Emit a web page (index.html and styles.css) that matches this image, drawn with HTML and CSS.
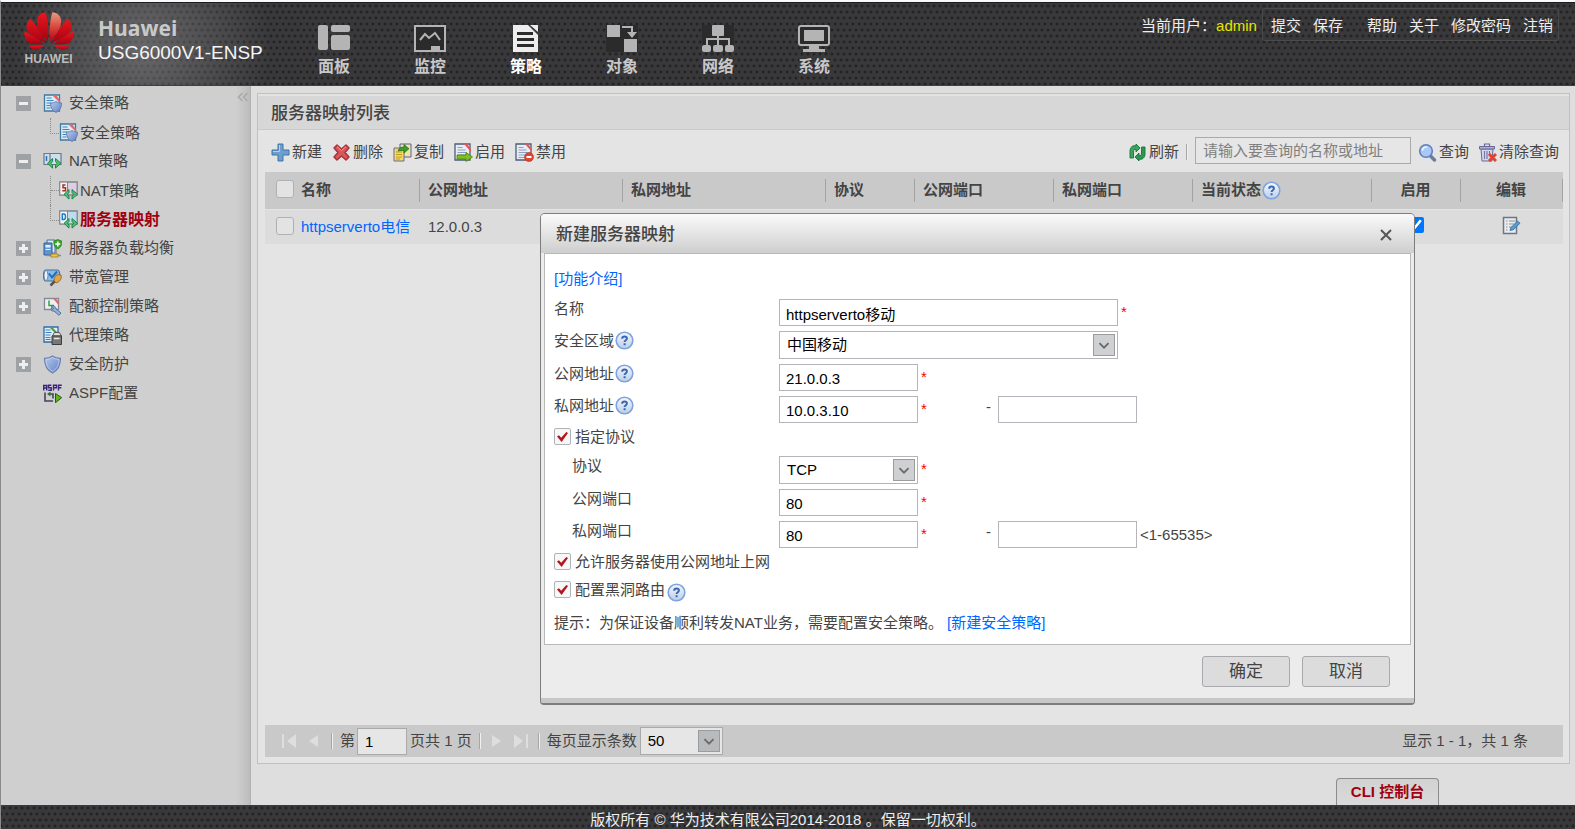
FILE: index.html
```html
<!DOCTYPE html>
<html lang="zh-CN">
<head>
<meta charset="utf-8">
<title>USG6000V1-ENSP</title>
<link rel="stylesheet" href="styles.css">
</head>
<body>
<svg class="sprite" aria-hidden="true">
  <defs>
    <linearGradient id="g-red" x1="0" y1="0" x2="0" y2="1"><stop offset="0" stop-color="#e5191f"/><stop offset="1" stop-color="#a80010"/></linearGradient>
    <linearGradient id="g-shine" x1="0" y1="0" x2="0" y2="1"><stop offset="0" stop-color="#eb9a84"/><stop offset="0.5" stop-color="#d9483c"/><stop offset="1" stop-color="#b80012"/></linearGradient>
    <linearGradient id="g-shield" x1="0" y1="0" x2="1" y2="1"><stop offset="0" stop-color="#b9cdec"/><stop offset="1" stop-color="#5d7fc4"/></linearGradient>
    <linearGradient id="g-help" x1="0" y1="0" x2="0" y2="1"><stop offset="0" stop-color="#f4f8fd"/><stop offset="1" stop-color="#bccfe9"/></linearGradient>
    <g id="p-side">
      <path d="M66 92C52 62 32 32 18 20C6 31 2 50 14 62C26 75 48 85 66 92Z"/>
      <path d="M60 97C40 80 12 63 1 58C-2 75 7 92 20 95C34 98 48 97 60 97Z"/>
      <path d="M60 100L14 101C20 112 32 116 40 112C50 108 56 104 60 100Z"/>
    </g>
  </defs>
  <symbol id="i-plus" viewBox="0 0 19 19"><path d="M7 1h5v6h6v5h-6v6H7v-6H1V7h6z" fill="#6d9fce" stroke="#3e75ab" stroke-linejoin="round"/><path d="M8.500 2v6.500H2" fill="none" stroke="#b3d1ec"/></symbol>
  <symbol id="i-cross" viewBox="0 0 19 19"><path d="M5 2l4.500 4L14 2l3 3-4 4.500 4 4.500-3 3-4.500-4L5 17l-3-3 4-4.500L2 5z" fill="#d9575a" stroke="#a83236" stroke-width="1.500" stroke-linejoin="round"/><path d="M5 3.500l4.500 4 4.500-4" fill="none" stroke="#ee9c9c"/></symbol>
  <symbol id="i-copy" viewBox="0 0 19 19"><path d="M7 1h11v13H7z" fill="#efe6a0" stroke="#5a5f9a"/><path d="M1 5h10v13H1z" fill="#f3dc66" stroke="#6a67a0"/><path d="M3 9h6M3 11.500h6M3 14h6M3 16h4" stroke="#c39a1c"/><path d="M5 8c1-3 3-4 6-4V1.500l5 4.200-5 4.300V7.500c-2 0-4 0-6 .5z" fill="#3f9a2a" stroke="#1d6a1a" stroke-width=".7"/></symbol>
  <symbol id="i-page" viewBox="0 0 19 19"><path d="M1 1h15v16H1z" fill="#e9edf3" stroke="#4c5c78" stroke-width="1.300"/><path d="M3.500 4.500h5M3.500 7h8M3.500 9.500h9M3.500 12h9M3.500 14.500h9" stroke="#8ba0bf"/><path d="M10 1h3l4 5v3z" fill="#e2565c"/></symbol>
  <symbol id="i-enable" viewBox="0 0 19 19"><use href="#i-page"/><path d="M3 12h9V9.500l6.500 4.500-6.500 4.500V16H3z" fill="#7fbf1f" stroke="#4a7d10" stroke-width=".8"/></symbol>
  <symbol id="i-disable" viewBox="0 0 19 19"><use href="#i-page"/><circle cx="14" cy="14" r="4.500" fill="#e0452f" stroke="#b02c1b" stroke-width=".6"/><path d="M11.500 14h5" stroke="#fff" stroke-width="2"/></symbol>
  <symbol id="i-refresh" viewBox="0 0 19 19"><path d="M2 15V8c0-4 3-6 6-5V1l4 4-4 4V6.500C6 6 5.500 7 5.500 9v6z" fill="#3fa45d" stroke="#167434" stroke-width=".9"/><path d="M17 4v7c0 4-3 6-6 5v2l-4-4 4-4v2.500c2 .5 2.500-.5 2.500-2.500V4z" fill="#2f9450" stroke="#167434" stroke-width=".9"/></symbol>
  <symbol id="i-search" viewBox="0 0 19 19"><path d="M11.500 12l5 5" stroke="#6d7f9c" stroke-width="3.500" stroke-linecap="round"/><circle cx="8" cy="8" r="6.300" fill="#a9c8f3" stroke="#5f7fc0" stroke-width="1.600"/><path d="M4.500 7c.5-2 2-3 4-3" fill="none" stroke="#e8f2fd" stroke-width="1.700" stroke-linecap="round"/></symbol>
  <symbol id="i-trash" viewBox="0 0 19 19"><path d="M3 6h12l-1 12H4z" fill="#d6d8ea" stroke="#66689a"/><path d="M1.500 3.500h15V6h-15z" fill="#aeb0cf" stroke="#66689a"/><path d="M6.500 3V1h5v2" fill="none" stroke="#66689a" stroke-width="1.200"/><path d="M6.500 8v8M9 8v8M11.500 8v4" stroke="#7577a8" stroke-width="1.200"/><path d="M11 11l7 7M18 11l-7 7" stroke="#e0452f" stroke-width="3"/></symbol>
  <symbol id="i-help" viewBox="0 0 19 19"><circle cx="9.500" cy="9.500" r="8.300" fill="url(#g-help)" stroke="#7fa3dd" stroke-width="1.600"/><path d="M7.200 7.700C7.200 6.200 8 5.500 9.500 5.500s2.400.8 2.400 2c0 1.700-2.300 1.700-2.300 3.500M9.600 12.300v2" fill="none" stroke="#3a68b0" stroke-width="2"/></symbol>
  <symbol id="i-edit" viewBox="0 0 19 19"><path d="M1.500 1.500h13v16h-13z" fill="#e8ebef" stroke="#6f7680" stroke-width="1.500"/><path d="M4 5h1.500M4 8h1.500M4 11h1.500M4 14h1.500M7 5h6M7 8h5M7 11h3" stroke="#8b929c" stroke-width="1.200"/><path d="M8 14.500l1-3L15.500 5l2.500 2.200-6.500 6.500z" fill="#5a9bd0" stroke="#2f6a9c" stroke-width=".8"/></symbol>
  <symbol id="i-shield" viewBox="0 0 19 19"><path d="M9.500 1c2.500 1.800 5 2.300 8 2.300 0 7-2 11.700-8 14.700-6-3-8-7.700-8-14.700 3 0 5.500-.5 8-2.300z" fill="url(#g-shield)" stroke="#6e7fae" stroke-width="1.200"/><path d="M9.500 2.500c2 1.300 4 1.800 6.500 2-.2 5-1.500 9-6.500 11.800-5-2.800-6.300-6.800-6.500-11.800 2.500-.2 4.500-.7 6.500-2z" fill="none" stroke="#c3d3ef" stroke-width=".8"/></symbol>
  <symbol id="i-policy" viewBox="0 0 19 19"><path d="M1.500 1h15v16h-15z" fill="#dceaf5" stroke="#3f7a9d" stroke-width="1.300"/><path d="M3.500 4h5M3.500 6.500h7M3.500 9h5M3.500 11.500h4M3.500 14h4" stroke="#3a86c0" stroke-width="1.200"/><path d="M9.500 1.500h4l3.500 5V9z" fill="#e06a70"/><path d="M13 7.500c1.700 1.200 3.500 1.500 5.500 1.500 0 5-1.700 7.500-5.500 9.500-3.800-2-5.500-4.500-5.500-9.500 2 0 3.800-.3 5.500-1.500z" fill="url(#g-shield)" stroke="#6477b0" stroke-width=".9"/></symbol>
  <symbol id="i-nat" viewBox="0 0 19 19"><path d="M1 1.500h17v11H1z" fill="#cddfee" stroke="#6d7788" stroke-width="1.200"/><path d="M7 1.500v11" stroke="#6d7788" stroke-width="1.200"/><path d="M3.500 4v5" stroke="#2f6fb8" stroke-width="1.500"/><path d="M9.500 6.500l-5 4.800 5 4.800v-3l-1.600-1.800 1.600-1.800zM12.500 6.500l5.500 4.800-5.500 4.800v-3l1.700-1.800-1.700-1.800z" fill="#52bf72" stroke="#15803c" stroke-width=".9"/></symbol>
  <symbol id="i-snat" viewBox="0 0 19 19"><path d="M.8 1h17.400v13H.8z" fill="#dccfe4" stroke="#7f8490" stroke-width="1.300"/><path d="M1.500 1.700H8v11.600H1.500z" fill="#f5f2f2"/><path d="M8.500 1v13" stroke="#7f8490"/><path d="M6.500 4H4v2.800h2.500v3H3.300" fill="none" stroke="#a83020" stroke-width="1.500"/><path d="M10 8.500l-5 4.800 5 4.800v-3l-1.600-1.800 1.600-1.800zM13 8.500l5.500 4.800-5.500 4.800v-3l1.700-1.800-1.700-1.800z" fill="#52bf72" stroke="#15803c" stroke-width=".9"/></symbol>
  <symbol id="i-dnat" viewBox="0 0 19 19"><path d="M.8 1h17.400v13H.8z" fill="#bfdcef" stroke="#7f8490" stroke-width="1.300"/><path d="M1.500 1.700H8v11.600H1.500z" fill="#f2f5f7"/><path d="M8.500 1v13" stroke="#7f8490"/><path d="M3.300 4h1.500c2.300 0 2.300 5.500 0 5.500H3.300z" fill="none" stroke="#1878c8" stroke-width="1.400"/><path d="M10 8.500l-5 4.800 5 4.800v-3l-1.600-1.800 1.600-1.800zM13 8.500l5.500 4.800-5.500 4.800v-3l1.700-1.800-1.700-1.800z" fill="#52bf72" stroke="#15803c" stroke-width=".9"/></symbol>
  <symbol id="i-balance" viewBox="0 0 19 19"><path d="M4 1h8v13H4z" fill="#dfe8f3" stroke="#4b6c9c"/><path d="M1 4h8v12H1z" fill="#5f96d0" stroke="#2f5e98"/><path d="M2.500 6h5v2.500h-5zM2.500 10h5v1h-5z" fill="#e9f2fb"/><path d="M13 9v6M4 16.500h14" stroke="#8a8a8a" stroke-width="1.500"/><path d="M8 15h7v3H8z" fill="#efc843" stroke="#a17c17" stroke-width=".8"/><path d="M14.800.5l4 1.500c.3 4-1 6.500-4 8-3-1.500-4.300-4-4-8z" fill="#3aa528" stroke="#23801a" stroke-width=".7"/><path d="M14.800 2.500v5M12.300 5h5" stroke="#fff" stroke-width="1.500"/></symbol>
  <symbol id="i-band" viewBox="0 0 19 19"><path d="M2.500 2h12c3 0 3 11 0 11h-12C0 13 0 2 2.500 2z" fill="#8bbce8" stroke="#4a6e9c" stroke-width="1.200"/><ellipse cx="3" cy="7.500" rx="2" ry="5" fill="#e9f2fa" stroke="#4a6e9c" stroke-width=".8"/><path d="M6 5.500l3 4 5-6" fill="none" stroke="#1f6fb5" stroke-width="2"/><path d="M7.500 17.500l5-5" stroke="#555" stroke-width="2.500"/><path d="M11 12.500c0-5 3-6.500 7-5.500 1.500 5-3 7.500-5 8z" fill="#e4a54a" stroke="#8c5d1c" stroke-width=".8"/></symbol>
  <symbol id="i-quota" viewBox="0 0 19 19"><path d="M1.500 1.500h14v11h-14z" fill="#edf0f1" stroke="#848b94" stroke-width="1.300"/><path d="M6 3.500v5h5" fill="none" stroke="#3a9b45" stroke-width="1.500"/><path d="M10 1.500h3l3 4v3z" fill="#e0656a"/><path d="M8 10c2-2 5-1 5 2l5 4-2 2.300-5-4.300c-2 .5-3.500-1-3-2.500l2 .8 1-1z" fill="#91b4dc" stroke="#47699c" stroke-width=".9"/></symbol>
  <symbol id="i-proxy" viewBox="0 0 19 19"><path d="M1 1h14v15H1z" fill="#e2eef7" stroke="#2e6fa8" stroke-width="1.300"/><path d="M2.500 4h5M2.500 6.500h6M2.500 9h5M2.500 11.500h5M2.500 13.500h5" stroke="#3a80bf"/><path d="M8 1.500l5 5" stroke="#4a9a3a" stroke-width="2"/><path d="M9.500 10l1.800-3.500h5L18.500 10z" fill="#dedede" stroke="#555"/><path d="M9 10h9.500v8.500H9z" fill="#777" stroke="#3d3d3d"/><path d="M11 12.500h5.500" stroke="#e8e8e8" stroke-width="1.500"/></symbol>
  <symbol id="i-aspf" viewBox="0 0 19 19"><path d="M.7 6.500V1.500h3v5M.7 4h3M8.300 1.200H5.500v2.500h2.700v2.500H5.300M10.500 6.500V1.200h3v2.500h-3M15.500 6.500V1.200h3.300M15.500 3.700h2.800" fill="none" stroke="#3d2480" stroke-width="1.400"/><path d="M2 8.500V17h8M10 14.500V10H5" fill="none" stroke="#44415c" stroke-width="1.600"/><path d="M7.500 7.500v5L4 10z" fill="#2a7a30"/><path d="M12.500 9.500l6.200 4.200-6.200 5z" fill="#5cb51d" stroke="#215f12"/></symbol>
</svg>

<header class="topbar">
  <div class="brand">
    <div class="logo">
      <svg class="emblem" viewBox="0 0 149 114" aria-hidden="true">
        <g fill="url(#g-red)"><path d="M71 88C74 60 72 20 64 1C50 2 38 12 38 30C39 52 55 72 71 88Z"/><use href="#p-side"/></g>
        <g transform="translate(149 0) scale(-1 1)"><path fill="url(#g-shine)" d="M71 88C74 60 72 20 64 1C50 2 38 12 38 30C39 52 55 72 71 88Z"/><use href="#p-side" fill="url(#g-red)"/></g>
      </svg>
      <span class="logo-name">HUAWEI</span>
    </div>
    <div class="product"><strong class="vendor">Huawei</strong><span class="model">USG6000V1-ENSP</span></div>
  </div>
  <nav class="mainnav">
    <a href="#" class="nav-item"><svg viewBox="0 0 32 27"><rect x="0" y="0" width="10" height="25" rx="2"/><rect x="13" y="0" width="19" height="7" rx="2"/><rect x="13" y="10" width="19" height="15" rx="2"/></svg>面板</a>
    <a href="#" class="nav-item"><svg viewBox="0 0 32 27"><path d="M1 1h30v25H1z" fill="#2b2b2c" stroke="#b4b4b4" stroke-width="2"/><path d="M6 15l5-6 4 4 6-5 5 7" fill="none" stroke="#b4b4b4" stroke-width="2"/><path d="M17 21h9v4h-9z"/></svg>监控</a>
    <a href="#" class="nav-item active"><svg viewBox="0 0 32 27"><path d="M3 0h15l10 10v17H3z"/><path d="M20 0h8v7z"/><path d="M7 8.500h16M7 14.500h17M7 20.500h17" stroke="#2b2b2c" stroke-width="3"/></svg>策略</a>
    <a href="#" class="nav-item"><svg viewBox="0 0 32 27"><path d="M0 0h32v27H0z" fill="#2b2b2c"/><path d="M1 0h13v12H1zM18 14h13v13H18z"/><path d="M16 2h10v6" fill="none" stroke="#b4b4b4" stroke-width="2"/><path d="M21 7h10l-5 6z"/></svg>对象</a>
    <a href="#" class="nav-item"><svg viewBox="0 0 32 27"><path d="M0 0h32v27H0z" fill="#2b2b2c"/><rect x="10" y="0" width="12" height="11" rx="1"/><path d="M16 10v11M5 21v-7h22v7" fill="none" stroke="#b4b4b4" stroke-width="2"/><rect x="0" y="20" width="9" height="7" rx="2"/><rect x="11" y="20" width="10" height="7" rx="2"/><rect x="23" y="20" width="9" height="7" rx="2"/></svg>网络</a>
    <a href="#" class="nav-item"><svg viewBox="0 0 32 27"><rect x="1" y="1" width="30" height="19" rx="2" fill="#2b2b2c" stroke="#b4b4b4" stroke-width="2"/><path d="M6 5h20v11H6zM11 20h10v4h6v3H5v-3h6z"/></svg>系统</a>
  </nav>
  <div class="account">
    <span class="current">当前用户：<b class="user">admin</b></span>
    <div class="account-links">
      <a href="#">提交</a><a href="#">保存</a><a href="#" class="split">帮助</a><a href="#">关于</a><a href="#">修改密码</a><a href="#">注销</a>
    </div>
  </div>
</header>

<div class="layout">
  <aside class="sidebar">
    <ul class="tree">
      <li class="node"><button class="toggle" aria-label="折叠"></button><svg class="ico"><use href="#i-policy"/></svg><a href="#">安全策略</a></li>
      <li class="node child"><span class="branch last"></span><svg class="ico"><use href="#i-policy"/></svg><a href="#">安全策略</a></li>
      <li class="node"><button class="toggle" aria-label="折叠"></button><svg class="ico"><use href="#i-nat"/></svg><a href="#">NAT策略</a></li>
      <li class="node child"><span class="branch"><i></i></span><svg class="ico"><use href="#i-snat"/></svg><a href="#">NAT策略</a></li>
      <li class="node child"><span class="branch last"></span><svg class="ico"><use href="#i-dnat"/></svg><a href="#" class="selected">服务器映射</a></li>
      <li class="node"><button class="toggle closed" aria-label="展开"></button><svg class="ico"><use href="#i-balance"/></svg><a href="#">服务器负载均衡</a></li>
      <li class="node"><button class="toggle closed" aria-label="展开"></button><svg class="ico"><use href="#i-band"/></svg><a href="#">带宽管理</a></li>
      <li class="node"><button class="toggle closed" aria-label="展开"></button><svg class="ico"><use href="#i-quota"/></svg><a href="#">配额控制策略</a></li>
      <li class="node leaf"><svg class="ico"><use href="#i-proxy"/></svg><a href="#">代理策略</a></li>
      <li class="node"><button class="toggle closed" aria-label="展开"></button><svg class="ico"><use href="#i-shield"/></svg><a href="#">安全防护</a></li>
      <li class="node leaf"><svg class="ico"><use href="#i-aspf"/></svg><a href="#">ASPF配置</a></li>
    </ul>
    <button class="collapse" aria-label="收起"><svg viewBox="0 0 12 10"><path d="M5.500 1l-4 4 4 4M10.500 1l-4 4 4 4"/></svg></button>
  </aside>

  <main class="workspace">
    <section class="panel">
      <h1 class="panel-title">服务器映射列表</h1>
      <div class="toolbar">
        <button class="tool"><svg class="ico"><use href="#i-plus"/></svg>新建</button>
        <button class="tool"><svg class="ico"><use href="#i-cross"/></svg>删除</button>
        <button class="tool"><svg class="ico"><use href="#i-copy"/></svg>复制</button>
        <button class="tool"><svg class="ico"><use href="#i-enable"/></svg>启用</button>
        <button class="tool"><svg class="ico"><use href="#i-disable"/></svg>禁用</button>
        <div class="tools-right">
          <button class="tool"><svg class="ico"><use href="#i-refresh"/></svg>刷新</button>
          <span class="bar"></span>
          <input class="search" type="text" placeholder="请输入要查询的名称或地址" aria-label="查询条件">
          <button class="tool"><svg class="ico"><use href="#i-search"/></svg>查询</button>
          <button class="tool"><svg class="ico"><use href="#i-trash"/></svg>清除查询</button>
        </div>
      </div>
      <div class="table-area">
        <table class="grid">
          <colgroup><col class="c-check"><col class="c-name"><col class="c-addr"><col class="c-addr"><col class="c-narrow"><col class="c-port"><col class="c-port"><col class="c-state"><col class="c-narrow"><col class="c-edit"></colgroup>
          <thead><tr>
            <th class="plain pick"><input type="checkbox" class="box" aria-label="全选"></th><th class="first">名称</th><th>公网地址</th><th>私网地址</th><th>协议</th><th>公网端口</th><th>私网端口</th>
            <th><span class="with-help">当前状态<svg class="ico"><use href="#i-help"/></svg></span></th><th class="mid">启用</th><th class="mid">编辑</th>
          </tr></thead>
          <tbody><tr>
            <td class="pick"><input type="checkbox" class="box" aria-label="选择 httpserverto电信"></td><td class="first"><a href="#">httpserverto电信</a></td><td>12.0.0.3</td><td></td><td></td><td></td><td></td><td></td>
            <td class="mid"><input type="checkbox" class="on" checked aria-label="启用"></td><td class="mid"><button class="plain-btn" aria-label="编辑"><svg class="ico"><use href="#i-edit"/></svg></button></td>
          </tr></tbody>
        </table>
      </div>
      <div class="pager">
        <button class="page-btn" aria-label="首页"><svg viewBox="0 0 16 14"><path d="M1 0h2v14H1zM15 0v14L6 7z"/></svg></button>
        <button class="page-btn" aria-label="上一页"><svg viewBox="0 0 16 14"><path d="M12 1v12L3 7z"/></svg></button>
        <span class="bar"></span>
        <label class="page-no">第<input type="text" value="1"></label>
        <span>页共 1 页</span>
        <span class="bar"></span>
        <button class="page-btn" aria-label="下一页"><svg viewBox="0 0 16 14"><path d="M4 1v12l9-6z"/></svg></button>
        <button class="page-btn" aria-label="末页"><svg viewBox="0 0 16 14"><path d="M13 0h2v14h-2zM1 0v14l9-7z"/></svg></button>
        <span class="bar"></span>
        <label class="page-size" for="size">每页显示条数</label>
        <span class="combo small"><select id="size"><option>50</option></select><svg class="arrow" viewBox="0 0 22 22"><path d="M6 9l5 5 5-5"/></svg></span>
        <span class="summary">显示 1 - 1，共 1 条</span>
      </div>
    </section>
    <div class="console-row"><button class="console">CLI 控制台</button></div>
  </main>
</div>

<footer class="footer">版权所有 © 华为技术有限公司2014-2018 。保留一切权利。</footer>

<div class="dialog" role="dialog" aria-labelledby="dlg-title">
  <div class="dialog-head"><h2 id="dlg-title">新建服务器映射</h2><button class="close" aria-label="关闭"><svg viewBox="0 0 12 12"><path d="M1 1l10 10M11 1L1 11"/></svg></button></div>
  <form class="dialog-body">
    <p class="intro"><a href="#">[功能介绍]</a></p>
    <div class="row"><label for="name">名称</label><input id="name" type="text" class="wide" value="httpserverto移动"><span class="req">*</span></div>
    <div class="row"><label for="zone">安全区域<svg class="ico"><use href="#i-help"/></svg></label><span class="combo wide"><select id="zone"><option>中国移动</option></select><svg class="arrow" viewBox="0 0 22 22"><path d="M6 9l5 5 5-5"/></svg></span></div>
    <div class="row"><label for="pub">公网地址<svg class="ico"><use href="#i-help"/></svg></label><input id="pub" type="text" value="21.0.0.3"><span class="req">*</span></div>
    <div class="row"><label for="priv">私网地址<svg class="ico"><use href="#i-help"/></svg></label><input id="priv" type="text" value="10.0.3.10"><span class="req">*</span><span class="dash">-</span><input type="text" aria-label="私网地址结束"></div>
    <label class="check"><input type="checkbox" checked>指定协议</label>
    <div class="row sub"><label for="proto">协议</label><span class="combo"><select id="proto"><option>TCP</option></select><svg class="arrow" viewBox="0 0 22 22"><path d="M6 9l5 5 5-5"/></svg></span><span class="req">*</span></div>
    <div class="row sub"><label for="pubport">公网端口</label><input id="pubport" type="text" value="80"><span class="req">*</span></div>
    <div class="row sub"><label for="privport">私网端口</label><input id="privport" type="text" value="80"><span class="req">*</span><span class="dash">-</span><input type="text" aria-label="私网端口结束"><span class="range">&lt;1-65535&gt;</span></div>
    <label class="check"><input type="checkbox" checked>允许服务器使用公网地址上网</label>
    <label class="check"><input type="checkbox" checked>配置黑洞路由<svg class="ico"><use href="#i-help"/></svg></label>
    <p class="tip">提示：为保证设备顺利转发NAT业务，需要配置安全策略。 <a href="#">[新建安全策略]</a></p>
  </form>
  <div class="dialog-foot"><button class="btn">确定</button><button class="btn">取消</button></div>
</div>
</body>
</html>
```

FILE: styles.css
```css
* { box-sizing: border-box; }

body {
  margin: 0;
  height: 100vh;
  display: flex;
  flex-direction: column;
  position: relative;
  overflow: hidden;
  border-top: 2px solid #fafafa;
  border-left: 1px solid #8a8a8a;
  background: #dedede;
  color: #444;
  font: 15px/20px "Liberation Sans", "Noto Sans CJK SC", sans-serif;
}

button, input, select { font: inherit; color: inherit; margin: 0; }
button { border: 0; padding: 0; background: none; white-space: nowrap; }
a { color: #0066ff; text-decoration: none; }
.sprite { position: absolute; width: 0; height: 0; }
.ico { width: 19px; height: 19px; flex: none; display: block; }

/* Header */
.topbar, .footer {
  background-color: #39393b;
  background-image:
    radial-gradient(circle at 3px 3px, #242425 1px, transparent 2px),
    radial-gradient(circle at 3px 3px, #242425 1px, transparent 2px);
  background-size: 6px 12px;
  background-position: 0 0, 3px 6px;
}
.topbar {
  flex: none;
  height: 84px;
  display: flex;
  border-top: 1px solid #1c1c1c;
  border-bottom: 1px solid #5a3435;
}
.brand {
  width: 285px;
  display: flex;
  gap: 24px;
  padding: 9px 0 0 22px;
  background: radial-gradient(ellipse 130px 130px at 140px 44px, rgba(150, 150, 152, .5), transparent);
}
.logo { width: 51px; display: flex; flex-direction: column; align-items: center; gap: 2px; }
.emblem { width: 50px; height: 38px; }
.logo-name { font-size: 12px; line-height: 14px; font-weight: bold; color: #bdbdbd; }
.product { display: flex; flex-direction: column; white-space: nowrap; }
.vendor { font: bold 21px/32px "Open Sans", sans-serif; color: #c9c9c9; }
.model { font-size: 19px; line-height: 17px; color: #f5f5f5; }
.mainnav { display: flex; }
.nav-item {
  width: 96px;
  padding-top: 22px;
  display: flex;
  flex-direction: column;
  align-items: center;
  font-size: 16px;
  line-height: 30px;
  font-weight: bold;
  color: #c8c8c8;
}
.nav-item svg { width: 32px; height: 27px; fill: #b4b4b4; }
.nav-item.active { color: #fff; }
.nav-item.active svg { fill: #ededed; }
.account { margin-left: auto; padding: 5px 16px 0 0; display: flex; align-items: flex-start; gap: 5px; color: #eee; white-space: nowrap; }
.account .current { line-height: 36px; }
.user { font-weight: normal; color: #e6e600; }
.account-links { display: flex; gap: 12px; padding: 0 5px 0 8px; border: 1px solid #4a4a4b; border-radius: 3px; line-height: 34px; height: 33px; }
.account-links a { color: #eee; }
.account-links .split { margin-left: 12px; }

/* Sidebar */
.layout { flex: 1; min-height: 0; display: flex; }
.sidebar {
  width: 250px;
  flex: none;
  display: flex;
  align-items: flex-start;
  background: linear-gradient(90deg, #cfcfcf 235px, #bcbcbc 249px);
  border-right: 1px solid #b2b2b2;
}
.tree { flex: 1; list-style: none; margin: 0; padding: 3px 0 0 15px; }
.node { height: 29px; display: flex; align-items: center; }
.node a { color: #444; margin-left: 7px; line-height: 27px; align-self: flex-start; }
.node .ico { margin-left: 12px; }
.leaf .ico { margin-left: 27px; }
.child .ico { margin-left: 0; }
.child a { margin-left: 2px; align-self: center; }
.node .selected { font-size: 16px; font-weight: bold; color: #a0000f; }
.toggle {
  width: 15px;
  height: 15px;
  background: linear-gradient(#eee, #eee) center / 9px 3px no-repeat, #9fa2a5;
}
.toggle.closed {
  background: linear-gradient(#eee, #eee) center / 9px 3px no-repeat, linear-gradient(#eee, #eee) center / 3px 9px no-repeat, #9fa2a5;
}
.branch { width: 9px; margin-left: 34px; height: 100%; border-left: 1px dotted #8c8c8c; }
.branch i { display: block; height: 50%; border-bottom: 1px dotted #8c8c8c; }
.branch.last { height: 55%; align-self: flex-start; border-bottom: 1px dotted #8c8c8c; }
.collapse { width: 12px; margin: 6px 1px 0 0; }
.collapse svg { display: block; width: 12px; height: 10px; fill: none; stroke: #a9a9a9; stroke-width: 1.5; }

/* List panel */
.workspace { flex: 1; min-width: 0; display: flex; flex-direction: column; padding: 7px 5px 0 6px; }
.panel { flex: 1; min-height: 0; display: flex; flex-direction: column; border: 1px solid #c0c0c0; background: #e4e4e4; padding-top: 2px; }
.panel-title { margin: 0; padding: 2px 0 0 13px; font-size: 17px; line-height: 31px; font-weight: 500; background: #d7d7d7; border-bottom: 1px solid #cacaca; }
.toolbar { height: 42px; display: flex; align-items: center; gap: 10px; padding: 2px 10px 0 13px; }
.tool { display: flex; align-items: center; gap: 2px; }
.tools-right { margin-left: auto; display: flex; align-items: center; gap: 7px; }
.tools-right .tool:last-child { margin-left: 2px; }
.bar { width: 2px; height: 16px; flex: none; border-left: 1px solid #a6a6a6; border-right: 1px solid #f0f0f0; }
.search { width: 216px; height: 27px; margin-bottom: 4px; padding: 0 7px; border: 1px solid #aaa; border-radius: 0; background: #e6e6e6; }
.search::placeholder { color: #808080; }
.table-area { flex: 1; padding: 0 6px 0 7px; }
.grid { width: 100%; table-layout: fixed; border-collapse: collapse; }
.c-check { width: 33px; }
.c-name { width: 122px; }
.c-addr { width: 203px; }
.c-narrow { width: 89px; }
.c-port { width: 139px; }
.c-state { width: 179px; }
.c-edit { width: 102px; }
.grid th, .grid td { padding: 0 0 0 8px; text-align: left; white-space: nowrap; }
.grid th { height: 37px; background: linear-gradient(#a2a2a2, #a2a2a2) right center / 1px 23px no-repeat, #c9c9c9; }
.grid th.plain { background: #c9c9c9; }
.grid td { height: 35px; background: #dcdcdc; border-top: 1px solid #e4e4e4; }
.grid .first { padding-left: 3px; }
.grid .mid { text-align: center; padding: 0 2px 0 0; }
.grid .pick { padding: 0 0 2px 11px; }
.with-help { display: flex; align-items: center; gap: 1px; }
.box { appearance: none; display: block; width: 18px; height: 18px; border: 1px solid #aeb1b4; border-radius: 3px; background: #e3e3e3; }
.on { width: 16px; height: 16px; display: block; margin: 0 auto 4px; }
.plain-btn { display: block; margin: 0 auto 3px; }
.pager { height: 32px; margin: 0 6px 6px 7px; padding: 0 35px 0 16px; display: flex; align-items: center; gap: 7px; background: #c9c9c9; white-space: nowrap; }
.page-btn svg { display: block; width: 16px; height: 14px; fill: #dedede; }
.page-btn { margin-right: 2px; }
.page-no { display: flex; align-items: center; gap: 2px; }
.page-no input { width: 50px; height: 27px; padding: 0 7px; border: 1px solid #aaa; background: #e6e6e6; color: #000; }
.pager .page-no + span { margin-left: -4px; }
.page-size { margin-right: -4px; }
.summary { margin-left: auto; }
.console-row { display: flex; justify-content: flex-end; padding: 14px 131px 0 0; }
.console { width: 103px; height: 27px; border: 1px solid #8c8c8c; border-bottom: 0; border-radius: 4px 4px 0 0; background: linear-gradient(#d2d2d2, #dadada); font-weight: bold; color: #a0000f; }

.footer { flex: none; height: 24px; line-height: 18px; padding-top: 6px; text-align: center; color: #eee; }

/* Drop-downs */
.combo { display: grid; width: 139px; height: 28px; align-items: center; }
.combo select, .combo .arrow { grid-area: 1 / 1; }
.combo select { appearance: none; width: 100%; height: 28px; padding: 0 7px; border: 1px solid #b4b4ba; border-radius: 0; background: #fff; color: #000; }
.arrow { width: 22px; height: 22px; margin-right: 3px; justify-self: end; pointer-events: none; fill: none; stroke: #6a6a6a; stroke-width: 2; background: #cfd0d2; border: 1px solid #9b9ca0; }
.combo.small { width: 83px; }
.small select { background: #e6e6e6; border-color: #aaa; }
.small .arrow { background: #b9babc; }

/* Dialog window */
.dialog {
  position: absolute;
  left: 539px;
  top: 211px;
  width: 875px;
  border: 1px solid #7d7d7d;
  border-bottom-width: 2px;
  border-radius: 5px 5px 4px 4px;
  background: #ececec;
  overflow: hidden;
}
.dialog-head { height: 39px; display: flex; align-items: center; justify-content: space-between; padding: 2px 22px 0 15px; background: linear-gradient(#fafafa, #cecece); }
.dialog-head h2 { margin: 0; font-size: 17px; line-height: 24px; font-weight: 500; }
.close svg { display: block; width: 12px; height: 12px; fill: none; stroke: #555; stroke-width: 2; }
.dialog-body { margin: 0 3px; padding: 13px 9px 8px; border: 1px solid #b9b9b9; background: #fff; display: flex; flex-direction: column; gap: 5px; }
.dialog-body p { margin: 0; height: 27px; line-height: 24px; }
.row { display: flex; align-items: flex-start; }
.row label { width: 225px; display: flex; align-items: center; gap: 1px; line-height: 19px; height: 19px; }
.row.sub label { padding-left: 18px; }
.row input { width: 139px; height: 27px; padding: 1px 6px 0; border: 1px solid #b4b4ba; border-radius: 0; background: #fff; color: #000; }
.row .wide { width: 339px; }
.req { width: 68px; padding-left: 3px; color: #f00; line-height: 26px; }
.dash { width: 12px; line-height: 22px; }
.range { padding-left: 3px; line-height: 27px; }
.check { height: 23px; display: flex; align-items: flex-start; line-height: 18px; }
.check input {
  appearance: none;
  width: 17px;
  height: 17px;
  margin-right: 4px;
  padding: 2px;
  border: 1px solid #b2b3b8;
  border-radius: 2px;
  background: #f7f7f7;
}
.check input:checked::before { content: ""; display: block; width: 11px; height: 11px; background: #b3151c; clip-path: polygon(0 50%, 18% 38%, 38% 62%, 85% 8%, 100% 18%, 42% 100%); }
.check .ico { margin: 2px 0 0 2px; }
.dialog-body .tip { line-height: 27px; }
.dialog-foot { display: flex; justify-content: flex-end; gap: 12px; padding: 11px 24px; border-bottom: 5px solid #c7c7c7; }
.btn { width: 88px; height: 31px; border: 1px solid #a9a9ad; border-radius: 3px; background: #dcdcdc; font-size: 17px; color: #444; }
```
